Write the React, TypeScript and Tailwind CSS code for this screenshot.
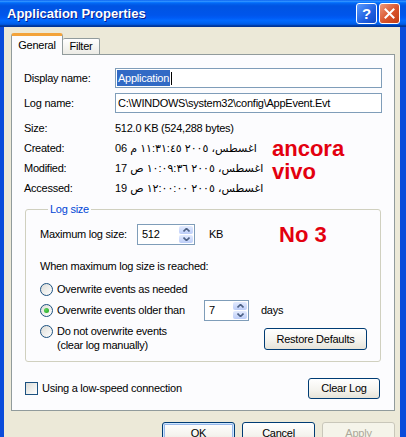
import type { ReactNode } from "react";

const xpButton =
  "flex items-center justify-center rounded-[3px] border border-[#003c74] bg-[linear-gradient(180deg,#ffffff_0%,#f5f4ef_55%,#e6e3d8_100%)] text-black";

function XpButton({
  children,
  className = "",
}: {
  children: ReactNode;
  className?: string;
}) {
  return <div className={`${xpButton} ${className}`}>{children}</div>;
}

function SpinArrow({ up }: { up?: boolean }) {
  return (
    <svg width="7" height="4" viewBox="0 0 7 4">
      <path
        d={up ? "M0.5 3.5 L3.5 0.5 L6.5 3.5" : "M0.5 0.5 L3.5 3.5 L6.5 0.5"}
        fill="none"
        stroke="#4d6185"
        strokeWidth="1.6"
      />
    </svg>
  );
}

// Numeric edit box with the up/down buttons sitting inside its right edge
function SpinBox({ value, className }: { value: string; className: string }) {
  return (
    <div
      className={`flex items-stretch border border-[#7f9db9] bg-white ${className}`}
    >
      <span className="flex-1 pl-[4px] leading-[19px]">{value}</span>
      <div className="flex w-[16px] flex-col gap-px p-px">
        <div className="flex flex-1 items-center justify-center rounded-[2px] bg-[linear-gradient(180deg,#e3ebfe,#bccdf8)]">
          <SpinArrow up />
        </div>
        <div className="flex flex-1 items-center justify-center rounded-[2px] bg-[linear-gradient(180deg,#e3ebfe,#bccdf8)]">
          <SpinArrow />
        </div>
      </div>
    </div>
  );
}

function Radio({ checked }: { checked?: boolean }) {
  return (
    <div className="flex h-[13px] w-[13px] shrink-0 items-center justify-center rounded-full border border-[#1c5180] bg-[linear-gradient(135deg,#dcdcd7,#ffffff)]">
      {checked && (
        <div className="h-[5px] w-[5px] rounded-full bg-[radial-gradient(circle_at_35%_35%,#5ad55a,#21a121)]" />
      )}
    </div>
  );
}

export default function App() {
  return (
    <div className="flex h-[437px] w-[406px] flex-col overflow-hidden bg-[#0a4cdb] font-['Liberation_Sans','DejaVu_Sans',sans-serif] text-[11px] tracking-[-0.25px] text-black">
      {/* Title bar */}
      <div className="flex h-[27px] shrink-0 items-center bg-[linear-gradient(180deg,#0058ee_0%,#3593ff_4%,#288eff_6%,#127dff_8%,#036ffc_10%,#0262ee_14%,#0057e5_20%,#0054e3_24%,#0055eb_56%,#005bf5_66%,#026afe_76%,#0062ef_86%,#0052d6_92%,#0040ab_94%,#003092_100%)] pl-[7px] pr-[6px]">
        <span className="flex-1 text-[13px] font-bold tracking-normal text-white [text-shadow:1px_1px_0_#0a1e8c]">
          Application Properties
        </span>
        <div className="flex gap-[2px]">
          <div className="flex h-[21px] w-[21px] items-center justify-center rounded-[3px] border border-white bg-[linear-gradient(135deg,#5a9bff,#1f5fe0_60%,#1048c8)] text-[15px] font-bold leading-none text-white">
            ?
          </div>
          <div className="flex h-[21px] w-[21px] items-center justify-center rounded-[3px] border border-white bg-[linear-gradient(135deg,#ee9a7c,#d9532b_55%,#c23c15)]">
            <svg width="11" height="11" viewBox="0 0 11 11">
              <path
                d="M1.5 1.5 L9.5 9.5 M9.5 1.5 L1.5 9.5"
                stroke="#fff"
                strokeWidth="2"
                strokeLinecap="square"
              />
            </svg>
          </div>
        </div>
      </div>

      {/* Dialog body */}
      <div className="ml-[4px] mr-[6px] flex flex-1 flex-col bg-[#ece9d8]">
        {/* Tabs */}
        <div className="ml-[7px] mt-[6px] flex items-end">
          <div className="relative z-10 -mb-px flex h-[22px] w-[52px] items-center justify-center rounded-t-[3px] border border-b-0 border-[#919b9c] border-t-[3px] border-t-[#f3a33a] bg-[#fcfcfe]">
            General
          </div>
          <div className="flex h-[16px] w-[37px] items-center justify-center rounded-t-[2px] border border-b-0 border-l-0 border-[#919b9c] bg-[linear-gradient(180deg,#ffffff,#ecebe5)]">
            Filter
          </div>
        </div>

        {/* Tab page */}
        <div className="ml-[7px] flex h-[357px] w-[384px] flex-col border border-[#919b9c] bg-[#fcfcfe] pl-[12px] pr-[12px] pt-[13px]">
          <div className="flex h-[20px] items-center">
            <span className="w-[91px]">Display name:</span>
            <div className="flex h-[20px] w-[267px] items-center border border-[#7f9db9] bg-white pl-px">
              <span className="bg-[#316ac5] px-px text-white">Application</span>
              <span className="ml-px h-[13px] w-px bg-black" />
            </div>
          </div>
          <div className="mt-[5px] flex h-[20px] items-center">
            <span className="w-[91px]">Log name:</span>
            <div className="flex h-[20px] w-[267px] items-center border border-[#7f9db9] bg-white pl-[2px]">
              {"C:\\WINDOWS\\system32\\config\\AppEvent.Evt"}
            </div>
          </div>

          {/* Log file details */}
          <div className="mt-[5px] flex">
            <div className="grid w-[248px] grid-cols-[91px_1fr] auto-rows-[20px] items-center">
              <span>Size:</span>
              <span>512.0 KB (524,288 bytes)</span>
              <span>Created:</span>
              <span dir="ltr">06 اغسطس، ٢٠٠٥ ١١:٣١:٤٥ م</span>
              <span>Modified:</span>
              <span dir="ltr">17 اغسطس، ٢٠٠٥ ١٠:٠٩:٣٦ ص</span>
              <span>Accessed:</span>
              <span dir="ltr">19 اغسطس، ٢٠٠٥ ١٢:٠٠:٠٠ ص</span>
            </div>
            <div className="pt-[19px] text-[22px] font-bold leading-[23px] tracking-normal text-[#e3000f]">
              <div>ancora</div>
              <div>vivo</div>
            </div>
          </div>

          {/* Log size group */}
          <fieldset className="mx-px mt-[4px] rounded-[3px] border border-[#d0d0bf] px-[14px] pb-[9px] pt-[8px]">
            <legend className="ml-[8px] px-[2px] leading-[14px] text-[#0046d5]">
              Log size
            </legend>
            <div className="flex h-[21px] items-center">
              <span className="w-[97px]">Maximum log size:</span>
              <SpinBox value="512" className="h-[21px] w-[58px]" />
              <span className="ml-[14px] w-[70px]">KB</span>
              <span className="text-[22px] font-bold leading-none tracking-normal text-[#e3000f]">
                No 3
              </span>
            </div>
            <div className="mt-[14px] leading-[14px]">
              When maximum log size is reached:
            </div>
            <div className="mt-[8px] flex h-[16px] items-center gap-[4px]">
              <Radio />
              <span>Overwrite events as needed</span>
            </div>
            <div className="mt-[3px] flex h-[21px] items-center gap-[4px]">
              <Radio checked />
              <span className="w-[143px]">Overwrite events older than</span>
              <SpinBox value="7" className="h-[21px] w-[45px]" />
              <span className="ml-[8px]">days</span>
            </div>
            <div className="mt-[3px] flex items-start">
              <div className="mt-[1px] flex h-[13px] items-center">
                <Radio />
              </div>
              <div className="ml-[4px] leading-[14px]">
                <div>Do not overwrite events</div>
                <div>(clear log manually)</div>
              </div>
              <XpButton className="ml-auto mr-[-1px] mt-[4px] h-[22px] w-[103px]">
                Restore Defaults
              </XpButton>
            </div>
          </fieldset>

          <div className="mt-[15px] flex h-[22px] items-center">
            <div className="ml-px h-[13px] w-[13px] border border-[#1c5180] bg-[linear-gradient(135deg,#dcdcd7,#ffffff)]" />
            <span className="ml-[4px]">Using a low-speed connection</span>
            <XpButton className="ml-auto mr-[2px] h-[21px] w-[72px]">
              Clear Log
            </XpButton>
          </div>
        </div>

        {/* Dialog buttons */}
        <div className="mt-[11px] flex justify-end gap-[7px] pr-[5px]">
          <XpButton className="h-[23px] w-[73px] shadow-[inset_0_0_0_1px_#cee7ff,inset_0_0_0_2px_#98b8ea]">
            OK
          </XpButton>
          <XpButton className="h-[23px] w-[73px]">Cancel</XpButton>
          <div className="flex h-[23px] w-[73px] items-center justify-center rounded-[3px] border border-[#c9c7ba] bg-[#f5f4ea] text-[#aca899]">
            Apply
          </div>
        </div>
      </div>
    </div>
  );
}
